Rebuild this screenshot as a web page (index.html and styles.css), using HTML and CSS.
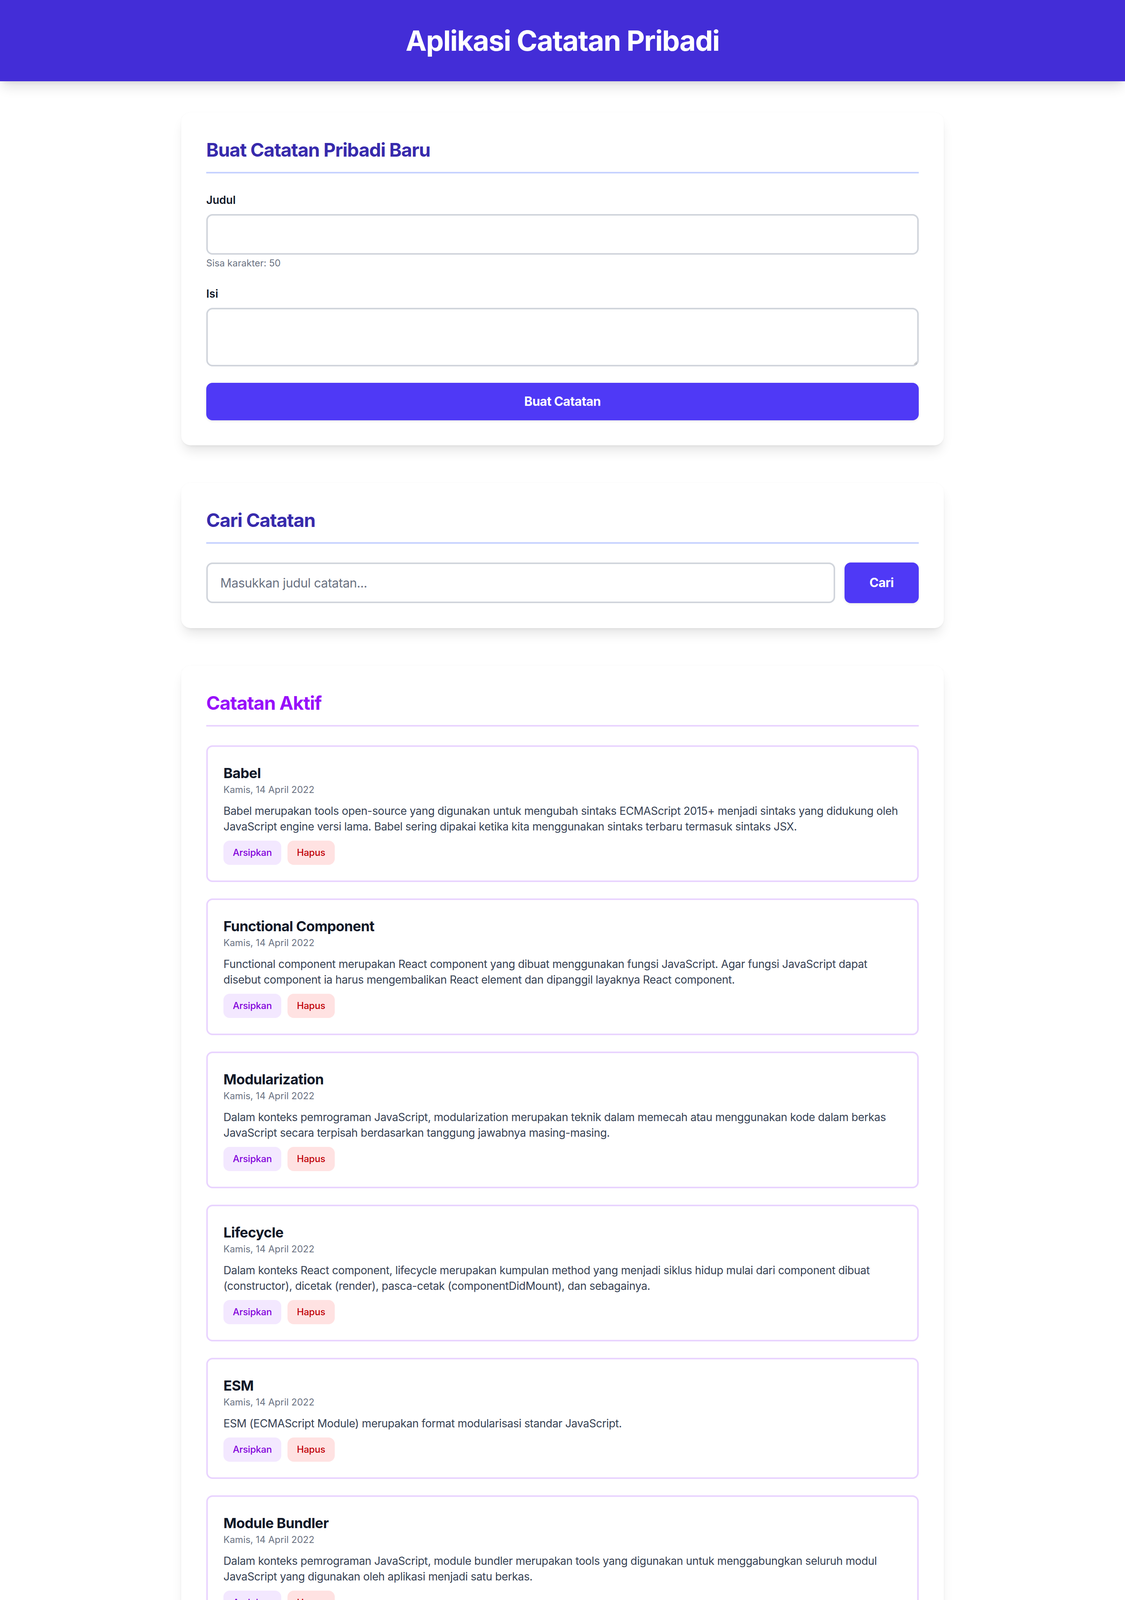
FILE: index.html
```html
<!DOCTYPE html>
<html lang="id">
<head>
<meta charset="utf-8">
<title>Aplikasi Catatan Pribadi</title>
<link rel="stylesheet" href="styles.css">
</head>
<body>
<header class="app-header">
  <h1 class="app-title">Aplikasi Catatan Pribadi</h1>
</header>
<main class="app-main">
  <section class="card card-form">
    <h2 class="card-heading heading-indigo">Buat Catatan Pribadi Baru</h2>
    <div class="field">
      <label class="field-label" for="judul">Judul</label>
      <input class="text-input" id="judul" type="text">
      <p class="field-help">Sisa karakter: 50</p>
    </div>
    <div class="field field-last">
      <label class="field-label" for="isi">Isi</label>
      <textarea class="text-area" id="isi"></textarea>
    </div>
    <button class="primary-btn full-btn" type="button">Buat Catatan</button>
  </section>

  <section class="card card-search">
    <h2 class="card-heading heading-indigo">Cari Catatan</h2>
    <div class="search-row">
      <input class="text-input search-input" type="text" placeholder="Masukkan judul catatan...">
      <button class="primary-btn search-btn" type="button">Cari</button>
    </div>
  </section>

  <section class="card card-notes">
    <h2 class="card-heading heading-purple">Catatan Aktif</h2>
    <div class="note-list">
      <article class="note">
        <h3 class="note-title">Babel</h3>
        <p class="note-date">Kamis, 14 April 2022</p>
        <p class="note-body">Babel merupakan tools open-source yang digunakan untuk mengubah sintaks ECMAScript 2015+ menjadi sintaks yang didukung oleh JavaScript engine versi lama. Babel sering dipakai ketika kita menggunakan sintaks terbaru termasuk sintaks JSX.</p>
        <div class="note-actions"><button class="chip chip-archive" type="button">Arsipkan</button><button class="chip chip-delete" type="button">Hapus</button></div>
      </article>
      <article class="note">
        <h3 class="note-title">Functional Component</h3>
        <p class="note-date">Kamis, 14 April 2022</p>
        <p class="note-body">Functional component merupakan React component yang dibuat menggunakan fungsi JavaScript. Agar fungsi JavaScript dapat disebut component ia harus mengembalikan React element dan dipanggil layaknya React component.</p>
        <div class="note-actions"><button class="chip chip-archive" type="button">Arsipkan</button><button class="chip chip-delete" type="button">Hapus</button></div>
      </article>
      <article class="note">
        <h3 class="note-title">Modularization</h3>
        <p class="note-date">Kamis, 14 April 2022</p>
        <p class="note-body">Dalam konteks pemrograman JavaScript, modularization merupakan teknik dalam memecah atau menggunakan kode dalam berkas JavaScript secara terpisah berdasarkan tanggung jawabnya masing-masing.</p>
        <div class="note-actions"><button class="chip chip-archive" type="button">Arsipkan</button><button class="chip chip-delete" type="button">Hapus</button></div>
      </article>
      <article class="note">
        <h3 class="note-title">Lifecycle</h3>
        <p class="note-date">Kamis, 14 April 2022</p>
        <p class="note-body">Dalam konteks React component, lifecycle merupakan kumpulan method yang menjadi siklus hidup mulai dari component dibuat (constructor), dicetak (render), pasca-cetak (componentDidMount), dan sebagainya.</p>
        <div class="note-actions"><button class="chip chip-archive" type="button">Arsipkan</button><button class="chip chip-delete" type="button">Hapus</button></div>
      </article>
      <article class="note">
        <h3 class="note-title">ESM</h3>
        <p class="note-date">Kamis, 14 April 2022</p>
        <p class="note-body">ESM (ECMAScript Module) merupakan format modularisasi standar JavaScript.</p>
        <div class="note-actions"><button class="chip chip-archive" type="button">Arsipkan</button><button class="chip chip-delete" type="button">Hapus</button></div>
      </article>
      <article class="note">
        <h3 class="note-title">Module Bundler</h3>
        <p class="note-date">Kamis, 14 April 2022</p>
        <p class="note-body">Dalam konteks pemrograman JavaScript, module bundler merupakan tools yang digunakan untuk menggabungkan seluruh modul JavaScript yang digunakan oleh aplikasi menjadi satu berkas.</p>
        <div class="note-actions"><button class="chip chip-archive" type="button">Arsipkan</button><button class="chip chip-delete" type="button">Hapus</button></div>
      </article>
    </div>
  </section>

  <section class="card card-archive">
    <h2 class="card-heading heading-orange">Arsip</h2>
    <p class="empty-text">Tidak ada arsip</p>
  </section>
</main>
</body>
</html>
```

FILE: styles.css
```css
* { box-sizing: border-box; }

html, body {
  margin: 0;
  padding: 0;
  background: #ffffff;
}

body {
  font-family: Inter, "Noto Sans", "Liberation Sans", sans-serif;
  color: #101828;
}

h1, h2, h3, p { margin: 0; }

.app-header {
  background: #432dd7;
  padding: 64px 0;
  text-align: center;
  box-shadow: 0 20px 30px -6px rgba(0, 0, 0, 0.12), 0 8px 12px -8px rgba(0, 0, 0, 0.1);
  position: relative;
  z-index: 1;
}

.app-title {
  color: #ffffff;
  font-size: 72px;
  line-height: 80px;
  font-weight: 700;
  letter-spacing: -1.6px;
}

.app-main {
  width: 1952px;
  margin: 0 auto;
  padding: 80px 0 80px;
  display: flex;
  flex-direction: column;
}

.card {
  background: #ffffff;
  border-radius: 24px;
  padding: 64px;
  box-shadow: 0 20px 30px -6px rgba(0, 0, 0, 0.1), 0 8px 12px -8px rgba(0, 0, 0, 0.08), 0 0 4px rgba(0, 0, 0, 0.03);
  margin-bottom: 96px;
}

.card-notes { margin-bottom: 82px; }
.card-archive { margin-bottom: 0; }

.card-heading {
  font-size: 48px;
  line-height: 64px;
  font-weight: 700;
  letter-spacing: -1.1px;
  padding-bottom: 24px;
  border-bottom: 4px solid;
  margin-bottom: 48px;
}

.heading-indigo { color: #372aac; border-color: #c6d2ff; }
.heading-purple { color: #9810fa; border-color: #e9d4ff; }
.heading-orange { color: #f54900; border-color: #ffd6a7; }

.field { margin-bottom: 42px; }
.field-last { margin-bottom: 42px; }

.field-label {
  display: block;
  font-size: 28px;
  line-height: 40px;
  font-weight: 600;
  color: #101828;
  margin-bottom: 16px;
}

.text-input,
.text-area {
  display: block;
  width: 100%;
  border: 4px solid #d1d5dc;
  border-radius: 16px;
  padding: 24px 32px;
  font-family: inherit;
  font-size: 32px;
  line-height: 48px;
  letter-spacing: -0.4px;
  color: #101828;
  background: #ffffff;
  outline: none;
}

.text-input { height: 104px; }

.text-area {
  height: 150px;
  resize: vertical;
}

.field-help {
  margin-top: 6px;
  font-size: 24px;
  line-height: 32px;
  color: #6a7282;
}

.primary-btn {
  background: #4f39f6;
  color: #ffffff;
  border: none;
  border-radius: 16px;
  font-family: inherit;
  font-size: 32px;
  font-weight: 700;
  line-height: 48px;
  letter-spacing: -0.5px;
  box-shadow: 0 2px 6px rgba(0, 0, 0, 0.1);
  cursor: pointer;
}

.full-btn {
  display: block;
  width: 100%;
  height: 96px;
}

.search-row {
  display: flex;
  gap: 24px;
  align-items: stretch;
}

.search-input { flex: 1; }
.search-input::placeholder { color: #6a7282; }

.search-btn {
  padding: 0 64px;
  height: 104px;
}

.note-list {
  display: flex;
  flex-direction: column;
  gap: 42px;
}

.note {
  border: 4px solid #e9d4ff;
  border-radius: 16px;
  padding: 40px;
}

.note-title {
  font-size: 36px;
  line-height: 54px;
  font-weight: 700;
  letter-spacing: -0.6px;
  color: #101828;
}

.note-date {
  font-size: 24px;
  line-height: 32px;
  color: #6a7282;
}

.note-body {
  margin-top: 18px;
  font-size: 28px;
  line-height: 40px;
  letter-spacing: -0.35px;
  color: #364153;
}

.note-actions {
  display: flex;
  gap: 16px;
  margin-top: 16px;
}

.chip {
  border: none;
  border-radius: 16px;
  padding: 14px 24px;
  font-family: inherit;
  font-size: 24px;
  line-height: 34px;
  font-weight: 500;
  letter-spacing: -0.2px;
  cursor: pointer;
}

.chip-archive { background: #f3e8ff; color: #8200db; }
.chip-delete { background: #ffe2e2; color: #c10007; }

.empty-text {
  text-align: center;
  padding: 32px 0;
  font-size: 32px;
  line-height: 48px;
  letter-spacing: -0.5px;
  color: #6a7282;
}
```
